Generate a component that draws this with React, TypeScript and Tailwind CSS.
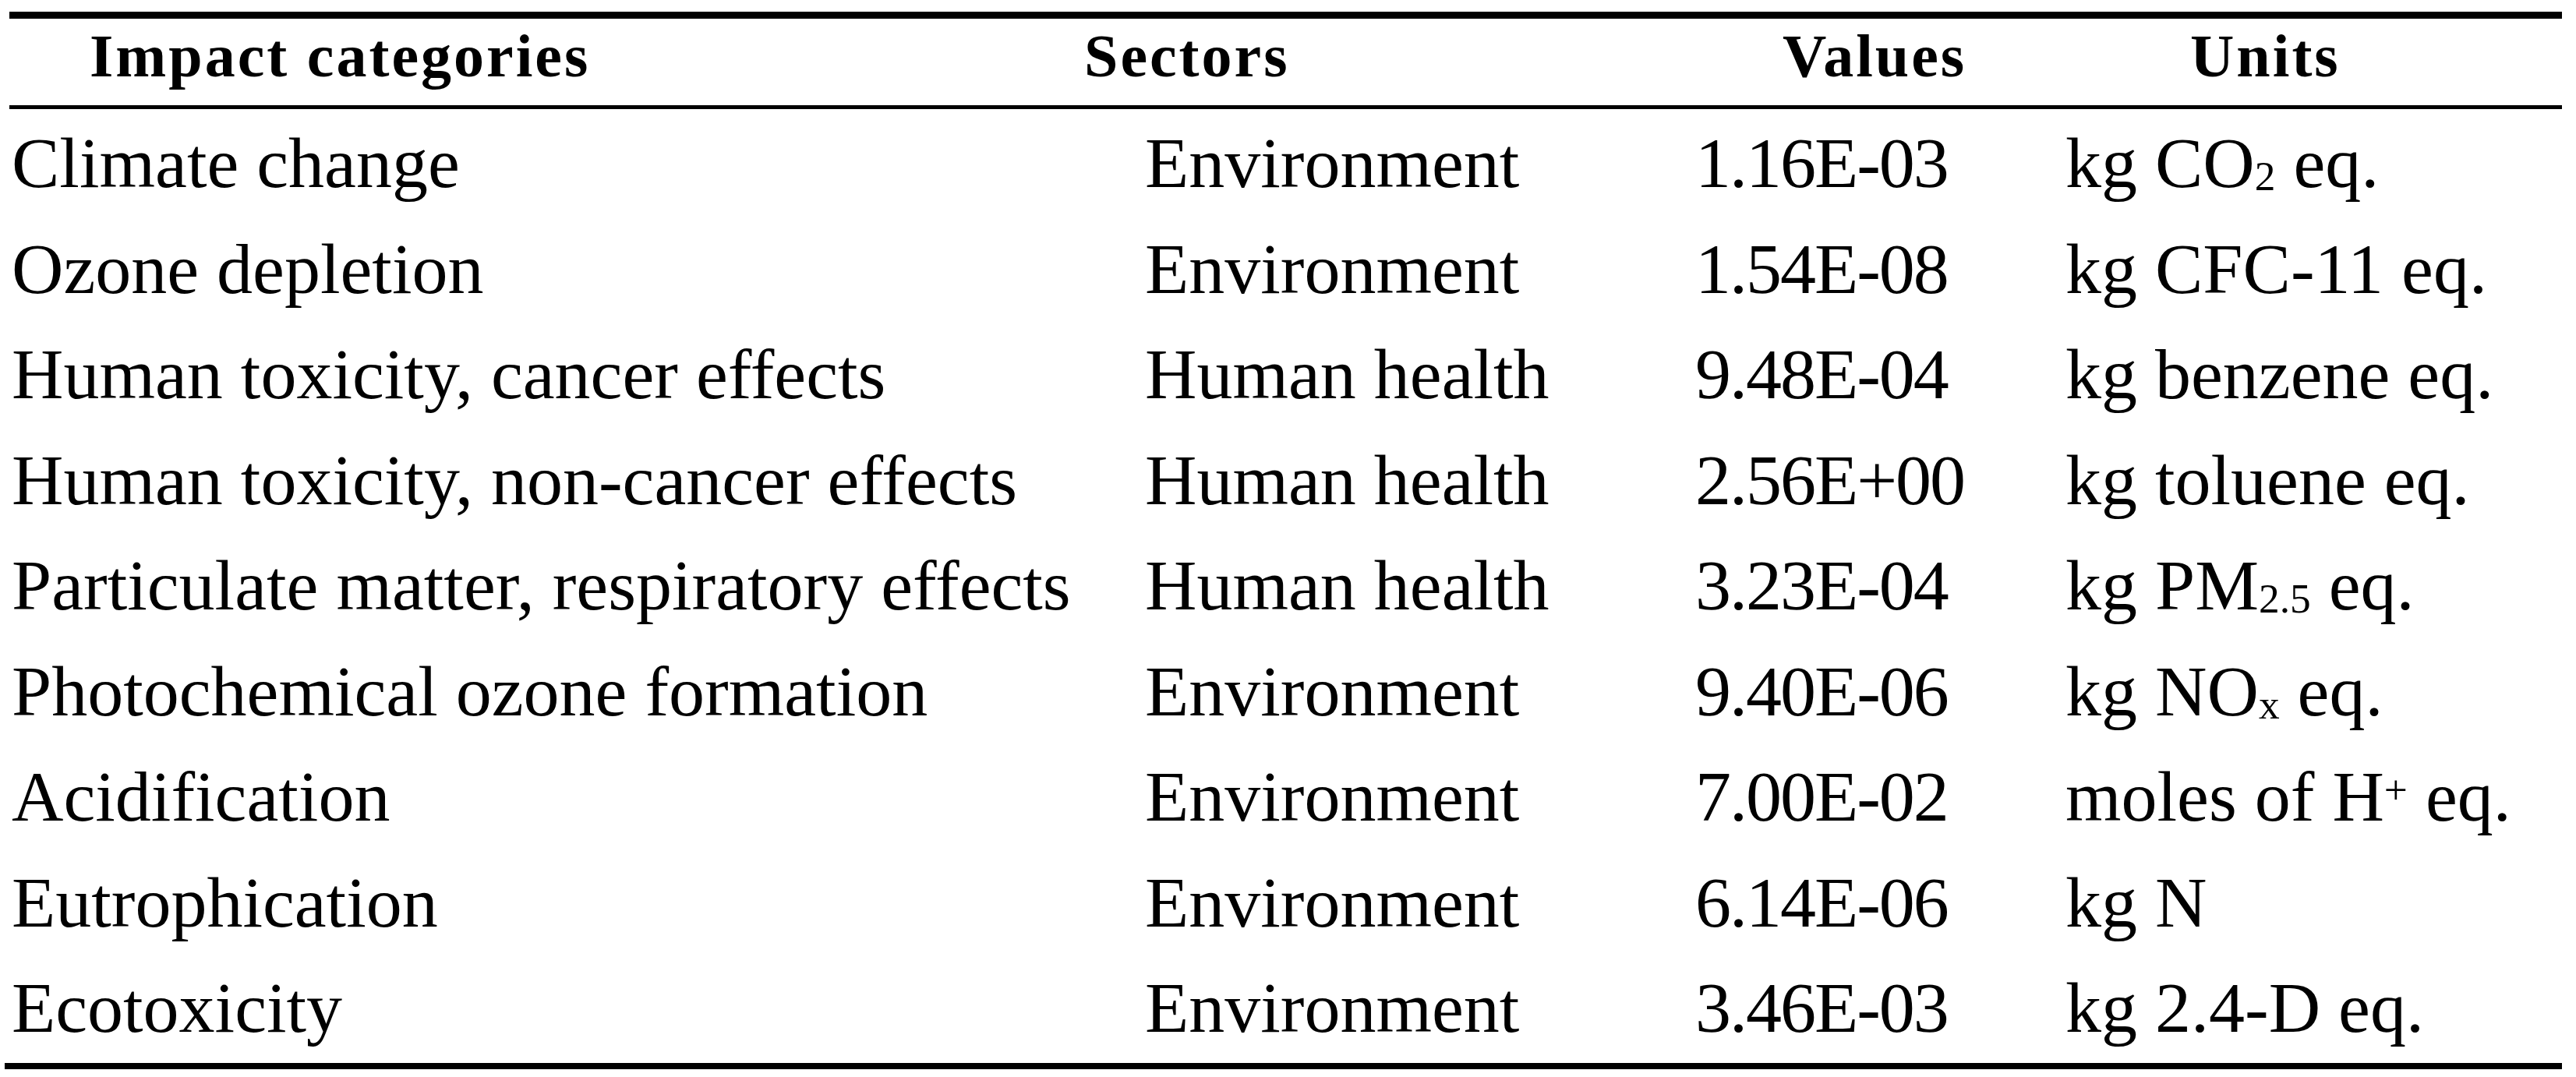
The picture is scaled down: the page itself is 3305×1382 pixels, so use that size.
import type { ReactNode } from 'react';

type Row = {
  category: string;
  sector: string;
  value: string;
  unit: ReactNode;
};

const Sub = ({ children }: { children: ReactNode }) => (
  <span className="relative top-[0.08em] text-[0.58em] leading-[0]">{children}</span>
);

const Sup = ({ children }: { children: ReactNode }) => (
  <span className="relative -top-[0.42em] text-[0.58em] leading-[0]">{children}</span>
);

const rows: Row[] = [
  { category: 'Climate change', sector: 'Environment', value: '1.16E-03', unit: <>kg CO<Sub>2</Sub> eq.</> },
  { category: 'Ozone depletion', sector: 'Environment', value: '1.54E-08', unit: 'kg CFC-11 eq.' },
  { category: 'Human toxicity, cancer effects', sector: 'Human health', value: '9.48E-04', unit: 'kg benzene eq.' },
  { category: 'Human toxicity, non-cancer effects', sector: 'Human health', value: '2.56E+00', unit: 'kg toluene eq.' },
  { category: 'Particulate matter, respiratory effects', sector: 'Human health', value: '3.23E-04', unit: <>kg PM<Sub>2.5</Sub> eq.</> },
  { category: 'Photochemical ozone formation', sector: 'Environment', value: '9.40E-06', unit: <>kg NO<Sub>x</Sub> eq.</> },
  { category: 'Acidification', sector: 'Environment', value: '7.00E-02', unit: <>moles of H<Sup>+</Sup> eq.</> },
  { category: 'Eutrophication', sector: 'Environment', value: '6.14E-06', unit: 'kg N' },
  { category: 'Ecotoxicity', sector: 'Environment', value: '3.46E-03', unit: 'kg 2.4-D eq.' },
];

export default function App() {
  return (
    <div className="min-h-screen bg-white pl-[6px] pt-[15px] font-['Liberation_Serif',serif] text-black">
      <div className="w-[3281px]">
        {/* top rule */}
        <div className="ml-[6px] h-[9px] bg-black" />

        {/* header */}
        <div className="flex h-[111px] pb-[15px] text-[78px] font-bold leading-[96px] tracking-[3px] whitespace-nowrap">
          <div className="w-[1385px] pl-[109px]">Impact categories</div>
          <div className="w-[896px]">Sectors</div>
          <div className="w-[523px]">Values</div>
          <div className="flex-1">Units</div>
        </div>

        {/* header rule */}
        <div className="ml-[6px] h-[5px] bg-black" />

        {/* body */}
        <div className="grid grid-cols-[1463px_706px_475px_1fr] auto-rows-[135.5px] py-[2px] text-[92px] leading-[135.5px] whitespace-nowrap">
          {rows.map((row) => (
            <div key={row.category} className="contents">
              <div className="pl-[9px]">{row.category}</div>
              <div>{row.sector}</div>
              <div className="tracking-[-2px]">{row.value}</div>
              <div>{row.unit}</div>
            </div>
          ))}
        </div>

        {/* bottom rule */}
        <div className="h-[8px] bg-black" />
      </div>
    </div>
  );
}
